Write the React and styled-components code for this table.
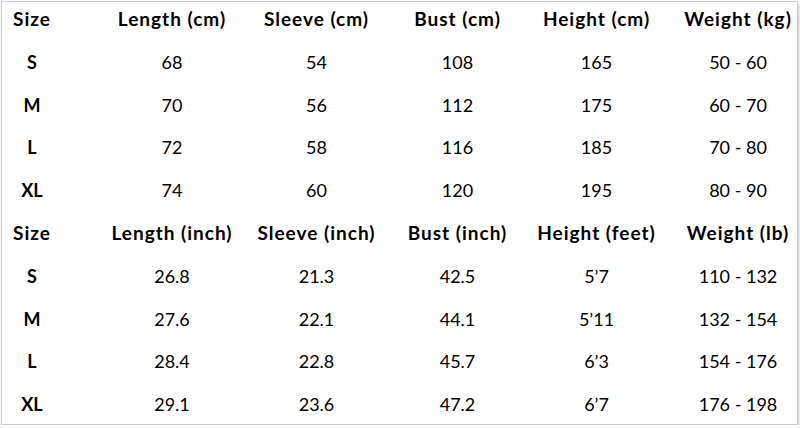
import React from 'react'
import styled, { createGlobalStyle } from 'styled-components'

const GlobalStyle = createGlobalStyle`
  html, body {
    margin: 0;
    padding: 0;
    background: #fff;
  }
  body {
    font-family: Lato, "Open Sans", sans-serif;
    color: #000;
  }
`

const Card = styled.div`
  box-sizing: border-box;
  width: 797px;
  height: 424px;
  margin: 1px 0 0 1px;
  border: 1px solid #cfcfcf;
  background: #fff;
  box-shadow: 1px 2px 3px rgba(0, 0, 0, 0.22);
  overflow: hidden;
`

const Grid = styled.div`
  display: grid;
  grid-template-columns: 97px 146px 143px 139px 139px 130px;
  grid-auto-rows: 42.8px;
`

const Cell = styled.div`
  display: flex;
  justify-content: center;
  align-items: flex-start;
  box-sizing: border-box;
  padding-top: 5px;
  line-height: 24px;
  font-size: 18px;
  font-weight: ${(props) => (props.bold ? 700 : 400)};
  padding-left: ${(props) => (props.col === 5 ? '14px' : '0')};
  padding-right: ${(props) => (props.col === 0 ? '37px' : '0')};
  white-space: nowrap;
`

const HeadCell = styled(Cell)`
  font-size: 19px;
  letter-spacing: 1px;
  padding-top: 5px;
`

const metric = {
  head: ['Size', 'Length (cm)', 'Sleeve (cm)', 'Bust (cm)', 'Height (cm)', 'Weight (kg)'],
  rows: [
    ['S', '68', '54', '108', '165', '50 - 60'],
    ['M', '70', '56', '112', '175', '60 - 70'],
    ['L', '72', '58', '116', '185', '70 - 80'],
    ['XL', '74', '60', '120', '195', '80 - 90'],
  ],
}

const imperial = {
  head: ['Size', 'Length (inch)', 'Sleeve (inch)', 'Bust (inch)', 'Height (feet)', 'Weight (lb)'],
  rows: [
    ['S', '26.8', '21.3', '42.5', '5\u20197', '110 - 132'],
    ['M', '27.6', '22.1', '44.1', '5\u201911', '132 - 154'],
    ['L', '28.4', '22.8', '45.7', '6\u20193', '154 - 176'],
    ['XL', '29.1', '23.6', '47.2', '6\u20197', '176 - 198'],
  ],
}

function Block({ data }) {
  return (
    <>
      {data.head.map((h, i) => (
        <HeadCell key={'h' + i} col={i} bold>
          {h}
        </HeadCell>
      ))}
      {data.rows.map((row, r) =>
        row.map((v, i) => (
          <Cell key={r + '-' + i} col={i} bold={i === 0}>
            {v}
          </Cell>
        ))
      )}
    </>
  )
}

export default function App() {
  return (
    <>
      <GlobalStyle />
      <Card>
        <Grid>
          <Block data={metric} />
          <Block data={imperial} />
        </Grid>
      </Card>
    </>
  )
}
